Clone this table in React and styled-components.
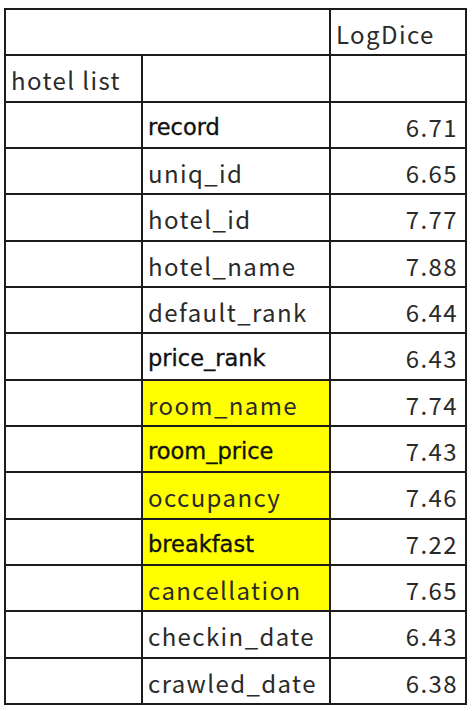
import React from "react";
import styled, { createGlobalStyle } from "styled-components";

const Global = createGlobalStyle`
  html, body { margin: 0; padding: 0; background: #ffffff; }
  body { font-family: "Noto Sans CJK JP", "Noto Sans", sans-serif; }
`;

const Page = styled.div`
  padding: 8px 0 0 4px;
`;

const Table = styled.table`
  border-collapse: collapse;
  table-layout: fixed;
  width: 463px;
  color: #2a2a2a;
  font-size: 24px;
`;

const Row = styled.tr`
  height: 46.33px;
`;

const Cell = styled.td`
  border: 2px solid #1c1c1c;
  padding: 4px 7px 0 ${(p) => (p.$num ? 0 : 5)}px;
  text-align: ${(p) => (p.$num ? "right" : "left")};
  vertical-align: middle;
  background: ${(p) => (p.$hl ? "#ffff00" : "#ffffff")};
  font-family: ${(p) =>
    p.$alt ? '"DejaVu Sans", "Noto Sans", sans-serif' : '"Noto Sans CJK JP", "Noto Sans", sans-serif'};
  font-size: ${(p) => (p.$alt ? 22.5 : 24)}px;
  letter-spacing: ${(p) => (p.$alt ? 0 : 1.4)}px;
  color: ${(p) => (p.$alt ? "#111111" : "#2a2a2a")};
  -webkit-text-stroke: ${(p) => (p.$alt ? "0.35px #111111" : "0")};
  white-space: nowrap;
  line-height: 1;
`;

const rows = [
  ["record", "6.71", false, true],
  ["uniq_id", "6.65", false, false],
  ["hotel_id", "7.77", false, false],
  ["hotel_name", "7.88", false, false],
  ["default_rank", "6.44", false, false],
  ["price_rank", "6.43", false, true],
  ["room_name", "7.74", true, false],
  ["room_price", "7.43", true, true],
  ["occupancy", "7.46", true, false],
  ["breakfast", "7.22", true, true],
  ["cancellation", "7.65", true, false],
  ["checkin_date", "6.43", false, false],
  ["crawled_date", "6.38", false, false],
];

export default function App() {
  return (
    <Page>
      <Global />
      <Table>
        <colgroup>
          <col style={{ width: 137 }} />
          <col style={{ width: 188 }} />
          <col style={{ width: 136 }} />
        </colgroup>
        <tbody>
          <Row>
            <Cell colSpan={2} />
            <Cell>LogDice</Cell>
          </Row>
          <Row>
            <Cell>hotel list</Cell>
            <Cell />
            <Cell />
          </Row>
          {rows.map(([name, val, hl, alt]) => (
            <Row key={name}>
              <Cell />
              <Cell $hl={hl} $alt={alt}>{name}</Cell>
              <Cell $num>{val}</Cell>
            </Row>
          ))}
        </tbody>
      </Table>
    </Page>
  );
}
